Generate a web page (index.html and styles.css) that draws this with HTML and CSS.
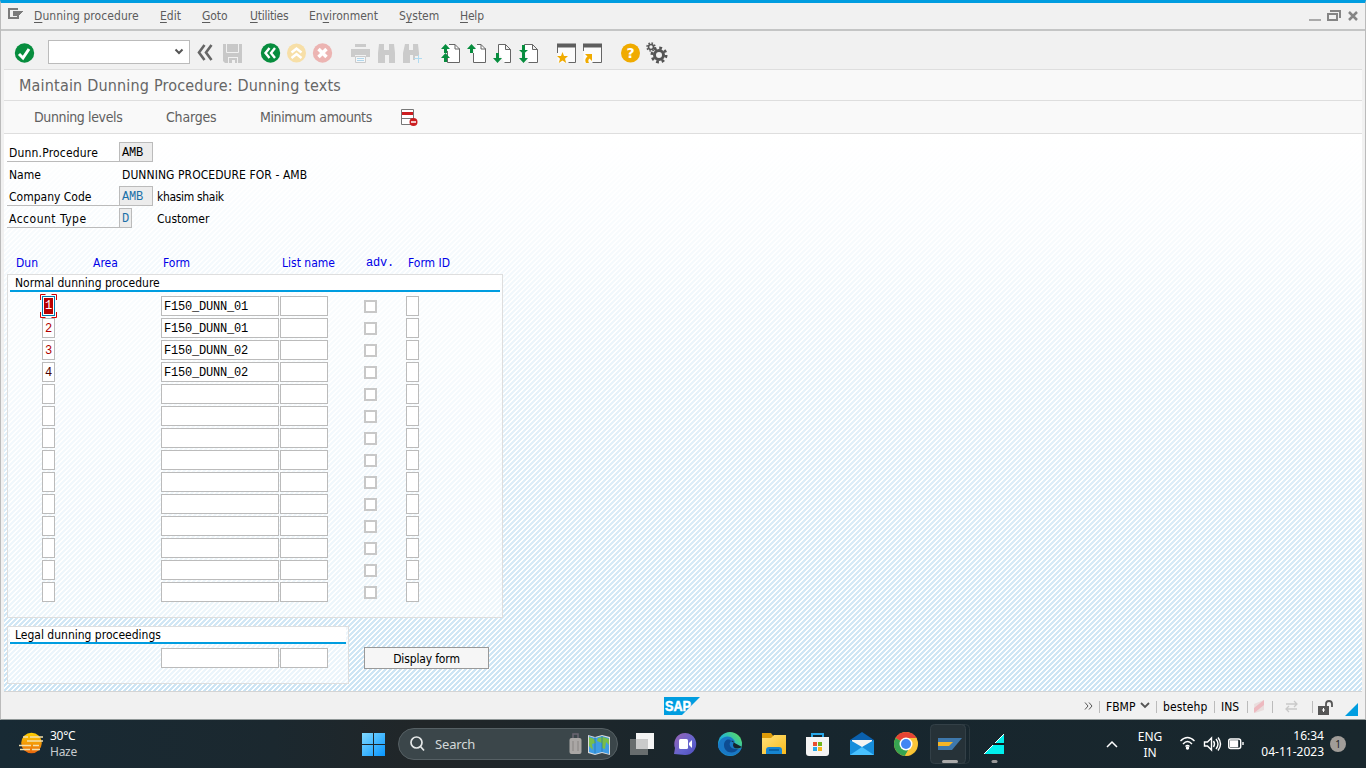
FILE: index.html
```html
<!DOCTYPE html>
<html lang="en">
<head>
<meta charset="utf-8">
<title>Maintain Dunning Procedure: Dunning texts</title>
<link rel="stylesheet" href="styles.css">
</head>
<body>
<div class="window">
  <nav class="menubar">
    <svg class="menu-icon" width="16" height="12" shape-rendering="crispEdges"><path d="M1 1H10M1 0V11M0 10H10M9.500 7V11" stroke="#7b7b7b" stroke-width="2" fill="none"/><path d="M5 3H15L11 8H5Z" fill="#7b7b7b"/></svg>
    <span class="m1"><u>D</u>unning procedure</span><span class="m2"><u>E</u>dit</span><span class="m3"><u>G</u>oto</span><span class="m4"><u>U</u>tilities</span><span class="m5">En<u>v</u>ironment</span><span class="m6">S<u>y</u>stem</span><span class="m7"><u>H</u>elp</span>
    <svg class="controls" width="52" height="14" fill="none" stroke="#858585" stroke-width="2"><path d="M1 11H13" stroke="#aaa"/><path d="M20 5H29V11H20ZM22 2H32V9"/><path d="M41 3L49 11M49 3L41 11" stroke-width="2.500"/></svg>
  </nav>
  <div class="toolbar">
    <svg class="tools" width="680" height="38" viewBox="0 31 680 38">
      <circle cx="24.500" cy="53" r="9.700" fill="#078d3e"/><path d="M19 54l4 4 6-9" fill="none" stroke="#fff" stroke-width="3"/>
      <rect x="48.500" y="40.500" width="141" height="23" fill="#fff" stroke="#bbb"/><path d="M175.500 49.500l3.500 3.500 3.500-3.500" fill="none" stroke="#555" stroke-width="2"/>
      <path d="M204.500 45l-5.500 7.500 5.500 7.500M211.500 45l-5.500 7.500 5.500 7.500" fill="none" stroke="#666" stroke-width="2.600"/>
      <path d="M223 44h19v19h-17l-2-2z" fill="#c8c8c8"/><path d="M226.500 44v8.500h12V44" fill="none" stroke="#f1f1f1"/><path d="M228 63v-6h10v6z" fill="#f1f1f1"/><path d="M229 63v-5h8v5h-2v-3h-3v3z" fill="#c8c8c8"/>
      <circle cx="270.500" cy="53" r="9.700" fill="#078d3e"/><path d="M269.500 48l-4 5 4 5M275 48l-4 5 4 5" fill="none" stroke="#fff" stroke-width="2.400"/>
      <circle cx="296.500" cy="53" r="9.500" fill="#f7dfa7"/><path d="M291.500 52.500l5-4 5 4M291.500 58l5-4 5 4" fill="none" stroke="#fff" stroke-width="2.500"/>
      <circle cx="322.500" cy="53" r="9.700" fill="#ecb4b2"/><path d="M318.500 49l8 8M326.500 49l-8 8" stroke="#fff" stroke-width="3.500"/>
      <g fill="#cbcbcb"><path d="M355 44h11v3h-11zM351 49h19v8h-4v-2h-11v2h-4z"/><path d="M355.500 56.500h10v6h-10z" fill="#f4f7f9" stroke="#cbcbcb"/><path d="M357 58.500h7M357 60.500h7" stroke="#b0d5ea"/>
      <path d="M379 44h5v6h5v-6h5l1 9v10h-6v-8h-4v8h-7v-10z"/><path d="M405 44h4v6h4v-6h5l1 9v3h-4v4h-2v-5h-3v8h-7v-10z"/><path d="M414 58.500h8M418.500 55v8" stroke="#b0dbf1"/></g>
      <g fill="#fff" stroke="#666"><path d="M447.500 51v11.500h12V49L455 44.500h-6M455 44.500v4.500h5"/><path d="M473.500 53v9.500h12V49L481 44.500h-4M481 44.500v4.500h5"/><path d="M498.500 53v-8.500h7l5 5v13h-6M505.500 44.500v5h5"/><path d="M524.500 52v-7.500h8l5 5v13h-9M532.500 44.500v5h5"/></g>
      <g fill="#078d3e"><path d="M445.500 44l4.500 5h-3v4h-3v-4h-3zM445.500 53l4.500 5h-3v4h-3v-4h-3zM471.500 44l4.500 5h-3v4h-3v-4h-3zM497.500 63l-4.500-5h3v-5h3v5h3zM523.500 54l-4.500-4h3v-5h3v5h3zM523.500 63l-4.500-5h3v-5h3v5h3z"/></g>
      <path d="M557.500 47v15.500h18V47M583.500 47v15.500h18V47" fill="#fbfbfb"/><path d="M557 43.500h19v4h-19zM583 43.500h19v4h-19z" fill="#5e5e5e"/><path d="M557.500 47v6M575.500 47v15.500h-7M583.500 47v4M601.500 47v15.500h-9" stroke="#666" fill="none"/><path d="M562.500 52l1.500 4h4l-3 2.700 1.200 4.300-3.700-2.500-3.700 2.500 1.200-4.300-3-2.700h4z" fill="#f0ab00"/><path d="M585 54h7v7l-2.500-2.500c-1.500 1-1.500 3-.5 4.500h-3c-1.500-3-.5-5 1.500-6.500z" fill="#f0ab00"/>
      <circle cx="630.500" cy="53" r="9.500" fill="#f0ab00"/><text x="630.500" y="58" class="question">?</text>
      <g fill="none" stroke="#555"><circle cx="659" cy="55" r="4.500" stroke-width="3"/><circle cx="659" cy="55" r="7" stroke-width="3" stroke-dasharray="2.750 2.750"/><circle cx="651" cy="47" r="2.500" stroke-width="1.600"/><circle cx="651" cy="47" r="4" stroke-width="1.500" stroke-dasharray="1.570 1.570"/></g>
    </svg>
  </div>
  <header class="title"><h1>Maintain Dunning Procedure: Dunning texts</h1></header>
  <div class="actions"><span class="a1">Dunning levels</span><span class="a2">Charges</span><span class="a3">Minimum amounts</span>
    <svg class="delete-row" width="18" height="18"><path d="M.500.500h12v15H.500zM0 9.500h12" fill="#fff" stroke="#777"/><path d="M1 3h11v3H1z" fill="#cc1d20"/><circle cx="12.500" cy="13" r="4" fill="#cc1d20"/><path d="M10 13h5" stroke="#fff" stroke-width="1.500"/></svg>
  </div>
  <main class="content">
    <section class="keys">
      <div class="key"><label class="lined k1">Dunn.Procedure</label><b class="code">AMB</b></div>
      <div class="key"><label class="k2">Name</label><span class="name">DUNNING PROCEDURE FOR - AMB</span></div>
      <div class="key"><label class="lined k3">Company Code</label><b class="code blue">AMB</b><span class="desc d1">khasim shaik</span></div>
      <div class="key"><label class="lined k4">Account Type</label><b class="code blue short">D</b><span class="desc d2">Customer</span></div>
    </section>
    <div class="heads"><span>Dun</span><span>Area</span><span>Form</span><span>List name</span><span class="mono">adv.</span><span>Form ID</span></div>
    <section class="group normal">
      <h2>Normal dunning procedure</h2>
      <div class="rows">
        <div class="row"><i class="active"><em>1</em><svg width="17" height="24" fill="none" stroke="#d00000"><path d="M5.500.500H.500V6M11.500.500h5V6M.500 18v5.500h5M16.500 18v5.500h-5"/></svg></i><i>F150_DUNN_01</i><i></i><i></i><i></i></div>
        <div class="row"><i class="red">2</i><i>F150_DUNN_01</i><i></i><i></i><i></i></div>
        <div class="row"><i class="red">3</i><i>F150_DUNN_02</i><i></i><i></i><i></i></div>
        <div class="row"><i class="dark">4</i><i>F150_DUNN_02</i><i></i><i></i><i></i></div>
        <div class="row"><i></i><i></i><i></i><i></i><i></i></div>
        <div class="row"><i></i><i></i><i></i><i></i><i></i></div>
        <div class="row"><i></i><i></i><i></i><i></i><i></i></div>
        <div class="row"><i></i><i></i><i></i><i></i><i></i></div>
        <div class="row"><i></i><i></i><i></i><i></i><i></i></div>
        <div class="row"><i></i><i></i><i></i><i></i><i></i></div>
        <div class="row"><i></i><i></i><i></i><i></i><i></i></div>
        <div class="row"><i></i><i></i><i></i><i></i><i></i></div>
        <div class="row"><i></i><i></i><i></i><i></i><i></i></div>
        <div class="row"><i></i><i></i><i></i><i></i><i></i></div>
      </div>
    </section>
    <div class="bottom">
      <section class="group legal"><h2>Legal dunning proceedings</h2><div class="legal-fields"><i></i><i></i></div></section>
      <button>Display form</button>
    </div>
  </main>
  <footer class="status">
    <svg class="sap" width="36" height="18"><path d="M0 0h36L18 18H0z" fill="#009de0"/><text x="1" y="13.500" textLength="26" lengthAdjust="spacingAndGlyphs">SAP</text></svg>
    <svg class="more" width="9" height="8" fill="none" stroke="#555"><path d="M1 .500l3 3.500-3 3.500M5 .500l3 3.500-3 3.500"/></svg>
    <span class="s1">FBMP</span><svg class="drop" width="10" height="7"><path d="M1 1l4 4 4-4" fill="none" stroke="#555" stroke-width="1.800"/></svg>
    <span class="s2">bestehp</span><span class="s3">INS</span>
    <svg class="state" width="112" height="22" viewBox="1247 696 112 22"><path d="M1247.500 700v12M1272.500 700v12M1312.500 700v12" stroke="#bbb"/><path d="M1254 703l10-4v10l-9 3z" fill="#e9dddd"/><path d="M1254 707l10-8v5l-10 8z" fill="#edb9bf"/><path d="M1286 703h11m-3-3l3 3-3 3M1297 708h-11m3-3l-3 3 3 3" fill="none" stroke="#c9c9c9" stroke-width="1.300"/><path d="M1318 705h11v9h-11z" fill="#555"/><path d="M1326 705v-2c0-4 6-4 6 0v3" fill="none" stroke="#555" stroke-width="1.800"/><path d="M1323.500 707v4m-1.500-2h3" stroke="#fff"/><path d="M1345 715h13v-13z" fill="#009de0"/></svg>
  </footer>
</div>
<div class="taskbar">
  <svg class="weather" width="26" height="24"><defs><linearGradient id="sun" x2="0" y2="1"><stop stop-color="#ffd000"/><stop offset="1" stop-color="#e9670d"/></linearGradient></defs><circle cx="12.500" cy="11" r="10.300" fill="url(#sun)"/><path d="M4 5h5M11 5h13M8 9h16M0 13.500h12M14 13.500h6M1 17.500h10M13 17.500h8" stroke="#f3dfac" stroke-width="1.700"/></svg>
  <div class="forecast"><span>30°C</span><span>Haze</span></div>
  <svg class="start" width="24" height="24"><defs><linearGradient id="win" x2="1" y2="1"><stop stop-color="#80d9ff"/><stop offset="1" stop-color="#0796ff"/></linearGradient></defs><path d="M0 0h11v11H0zM12 0h11v11H12zM0 12h11v11H0zM12 12h11v11H12z" fill="url(#win)"/></svg>
  <div class="search">
    <svg width="16" height="16" fill="none" stroke="#e5e8e8" stroke-width="1.700"><circle cx="6.500" cy="6.500" r="5.500"/><path d="M10.500 10.500L14 14.500"/></svg><span>Search</span>
    <svg class="travel" width="42" height="24"><path d="M4 8V2h5v6" fill="none" stroke="#6b6572" stroke-width="1.500"/><rect x=".500" y="6" width="12" height="16" rx="2" fill="#aaa7a5"/><path d="M4 9v10M9 9v10" stroke="#878482"/><path d="M19 3l7 2 7-2 8 2v18l-8-2-7 2-7-2z" fill="#ddd"/><path d="M20 4l6 2 7-2 7 2v16l-7-2-7 2-6-2z" fill="#3f9ce4"/><path d="M20 5l5 2 2 4-4 1 1 6-4-4zM29 6l5-1 6 2v6l-3-3-1 7-3-1v-5l-5-2z" fill="#79bd4a"/><path d="M26 5v16M33 4v16" stroke="#2475a6" opacity=".7"/></svg>
  </div>
  <svg class="apps" width="380" height="48" viewBox="628 720 380 48">
    <defs><linearGradient id="edge" x1="0" y1="1" x2="1" y2="0"><stop stop-color="#1377c9"/><stop offset=".5" stop-color="#24b6cf"/><stop offset="1" stop-color="#65e34c"/></linearGradient><linearGradient id="chat" x2="1" y2="1"><stop stop-color="#9a62b2"/><stop offset=".6" stop-color="#6264cf"/><stop offset="1" stop-color="#504bb8"/></linearGradient><linearGradient id="folder" x2="1" y2="1"><stop stop-color="#ffe17b"/><stop offset="1" stop-color="#f9ba1b"/></linearGradient></defs>
    <path d="M636 733h18v16h-18z" fill="#f4f4f4"/><path d="M630 739h18v16h-18z" fill="#686d6e"/><path d="M636 739h12v10h-12z" fill="#c9caca"/>
    <path d="M674 754l1-6a11 11 0 1 1 10 7z" fill="url(#chat)"/><rect x="679" y="739" width="9" height="10" rx="1.500" fill="#fff"/><path d="M689 743l3-3v8l-3-3z" fill="#fff"/>
    <circle cx="730" cy="744" r="12" fill="url(#edge)"/><path d="M718 746c1-9 11-13 16-6 2 3-1 4 0 7 2 3 6 2 8 0-2 7-10 11-17 7-5-3-7-6-7-8" fill="#1978c5"/><path d="M724 745c0-5 5-7 7-4-3 3-1 9 7 8-4 6-14 4-14-4" fill="#0d4c92"/><path d="M731 741c3-1 3 1 2 4 0 3 3 5 9 2" fill="#17252d"/>
    <path d="M762 733h9l3 4-3 3h-9z" fill="#dd9b08"/><path d="M762 738h9l3-3h12v19h-24z" fill="url(#folder)"/><path d="M766 754v-4q0-3 3-3h10q3 0 3 3v4z" fill="#1685d1"/><path d="M769 750h10" stroke="#075a9a" stroke-width="1.500"/>
    <path d="M812 738v-4h11v4" fill="none" stroke="#28a7e8" stroke-width="2"/><path d="M806 737h23v16q0 3-3 3h-17q-3 0-3-3z" fill="#f4f4f4"/><path d="M813 742h4v4h-4z" fill="#e84f32"/><path d="M818 742h4v4h-4z" fill="#70b51b"/><path d="M813 747h4v4h-4z" fill="#28a7e8"/><path d="M818 747h4v4h-4z" fill="#f7b51a"/>
    <path d="M850 740l12-8 12 8v5h-24z" fill="#0a60ad"/><path d="M852 740h20v8h-20z" fill="#f3f3f3"/><path d="M850 740l12 7 12-7v15h-24z" fill="#168ddb"/><path d="M850 755l12-8 12 8z" fill="#48c1ff"/>
    <circle cx="906" cy="744" r="12" fill="#f5c02f"/><path d="M906 744L895.600 738A12 12 0 0 1 916.400 738z" fill="#e74335"/><path d="M906 744L895.600 738A12 12 0 0 0 905 756l5-9z" fill="#36a451"/><path d="M906 738h10.500q2 6-.5 11.500l-7 6-4 0 6-10z" fill="#fbc538"/><circle cx="906" cy="744" r="6.500" fill="#fff"/><circle cx="906" cy="744" r="5" fill="#4285f4"/>
    <rect x="933.500" y="724.500" width="36" height="39" rx="4" fill="none" stroke="#2b383e"/><rect x="930.500" y="724.500" width="35" height="39" rx="4" fill="#263238" stroke="#334047"/><path d="M938 738h24l-10 12h-14z" fill="#3e78ac"/><path d="M938 742h15l-4 4h-11z" fill="#f5b526"/><path d="M943.500 761.500h13" stroke="#aaa" stroke-width="3" stroke-linecap="round"/>
    <path d="M984 754l20-20v20z" fill="#00efed"/><path d="M984 754l20-20" stroke="#fff"/><path d="M993 744h12" stroke="#101a20" stroke-width="2"/><path d="M993 761.500h3" stroke="#999" stroke-width="3" stroke-linecap="round"/>
  </svg>
  <svg class="up" width="12" height="8"><path d="M1 7l5-5 5 5" fill="none" stroke="#fff" stroke-width="1.500"/></svg>
  <div class="language"><span>ENG</span><span>IN</span></div>
  <svg class="network" width="64" height="18" fill="none" stroke="#fff" stroke-width="1.400"><path d="M.500 6q7-7 14 0M3 9q4.500-5 9 0M5.500 11.500q2-2 4 0"/><circle cx="7.500" cy="13" r="1" fill="#fff"/><path d="M24.500 7h3l4-4v12l-4-4h-3zM33.500 6q2 3 0 6M36 4q4 5 0 10M38 2.500q5 6.500 0 13"/><rect x="48.700" y="4" width="12" height="9.500" rx="2"/><path d="M50.500 6h7v5.500h-7z" fill="#fff"/><path d="M63 7v3"/></svg>
  <div class="clock"><span>16:34</span><span>04-11-2023</span></div><span class="badge">1</span>
</div>
</body>
</html>
```

FILE: styles.css
```css
* { box-sizing: border-box; }
body { margin: 0; width: 1366px; height: 768px; overflow: hidden; font: 12px/16px "DejaVu Sans Condensed", "DejaVu Sans", sans-serif; font-stretch: condensed; color: #000; }
svg { display: block; flex: none; }
span, label, h1, h2 { white-space: nowrap; }
.window { display: flex; flex-direction: column; height: 720px; border: 1px solid #bbb; border-top: 3px solid #009de0; background: #f1f1f1; border-bottom-color: #909898; }
.menubar { display: flex; height: 28px; padding: 5px 5px 0 7px; border-bottom: 2px solid #c4c5c5; color: #5c5c5c; flex: none; }
.menubar span { flex: none; }
.menubar u { text-underline-offset: 2px; }
.menu-icon { margin-right: 10px; }
.m1 { width: 126px; letter-spacing: .06px; } .m2 { width: 42px; } .m3 { width: 48px; letter-spacing: -.1px; } .m4 { width: 59px; letter-spacing: -.25px; } .m5 { width: 90px; } .m6 { width: 61px; } .m7 { letter-spacing: -.2px; }
.controls { margin: 1px 0 0 auto; }
.toolbar { height: 39px; flex: none; margin: 0 3px; border-bottom: 1px solid #dedede; }
.tools { margin-left: -4px; }
.question { fill: #fff; font: bold 14px "DejaVu Sans", sans-serif; text-anchor: middle; }
.title { height: 31px; flex: none; margin: 0 3px; padding: 6px 15px; background: #f9f9f9; border-bottom: 1px solid #dedede; }
h1 { margin: 0; font: 16px/19px "DejaVu Sans Condensed", sans-serif; letter-spacing: .18px; color: #666; }
.actions { display: flex; height: 33px; flex: none; margin: 0 3px; padding: 8px 30px; background: #f9f9f9; border-bottom: 1px solid #dedede; color: #606060; font-size: 14px; line-height: 17px; letter-spacing: -.38px; }
.a1 { width: 132px; } .a2 { width: 94px; letter-spacing: -.2px; } .a3 { width: 141px; }
.content { height: 558px; flex: none; margin: 0 3px; border-bottom: 1px solid #d4d4d4; padding: 8px 3px 0; background: linear-gradient(#fff 0%, rgba(255,255,255,.85) 20%, rgba(255,255,255,.4) 62%, rgba(255,255,255,.08) 100%), url("data:image/svg+xml,%3Csvg xmlns='http://www.w3.org/2000/svg' width='5' height='5' shape-rendering='crispEdges'%3E%3Cpath fill='%23fff' d='M0 0h5v5H0z'/%3E%3Cpath fill='%23c7e2f3' d='M0 0h3v1H0zM4 1h1v1H4zM0 1h2v1H0zM3 2h2v1H3zM0 2h1v1H0zM2 3h3v1H2zM1 4h3v1H1z'/%3E%3C/svg%3E"); }
.keys { height: 112px; }
.key { display: flex; height: 22px; }
.key label { width: 112px; height: 20px; padding: 3px 2px; }
.lined { border-bottom: 1px solid #bbb; }
.k1 { letter-spacing: .18px; } .k4 { letter-spacing: .5px; }
.code { width: 34px; height: 20px; padding: 2px 2px; border: 1px solid #bbb; background: #ececec; font: 12px/17px "Liberation Mono", monospace; letter-spacing: -.2px; }
.blue { color: #1b70a8; }
.short { width: 13px; }
.name { padding: 3px; letter-spacing: .07px; }
.desc { padding: 3px 4px; }
.d1 { letter-spacing: -.32px; }
.d2 { margin-left: 21px; }
.heads { display: grid; grid-template-columns: 77px 70px 119px 84px 42px 1fr; padding: 1px 0 0 9px; height: 20px; color: #0000e8; }
.mono, i { font: 12px/16px "Liberation Mono", monospace; letter-spacing: -.2px; }
.group { border: 1px solid #dedede; background: rgba(255,255,255,.6); }
h2 { margin: 0 2px; height: 17px; padding-left: 5px; border-bottom: 2px solid #009de0; background: #fff; font: inherit; line-height: 17px; }
.normal { width: 496px; height: 344px; }
.rows { padding: 4px 0 0 34px; }
.row { display: grid; grid-template-columns: 13px 106px 118px 1px 48px 36px 13px 29px 13px; height: 22px; }
.row i, .legal-fields i { height: 20px; border: 1px solid #bbb; background: #fff; padding: 2px; }
.row i:nth-child(2) { grid-column: 3; }
.row i:nth-child(3) { grid-column: 5; }
.row i:nth-child(4) { grid-column: 7; width: 13px; height: 13px; margin-top: 4px; border: 2px solid #c8c8c8; }
.row i:nth-child(5) { grid-column: 9; }
.row .red { color: #b00000; }
.row .dark { color: #4a0000; }
.row .active { position: relative; border-color: #007cb0; padding: 1px; }
.active em { display: block; height: 16px; background: #b80000; color: #fff; font-style: normal; padding-left: 1px; }
.active svg { position: absolute; left: -3px; top: -3px; }
.bottom { display: flex; gap: 15px; margin-top: 8px; }
.legal { width: 342px; height: 58px; }
.legal-fields { display: flex; gap: 1px; padding: 4px 0 0 153px; }
.legal-fields i:first-child { width: 118px; }
.legal-fields i:last-child { width: 48px; }
button { width: 125px; height: 22px; margin-top: 21px; padding: 1px 0 0; border: 1px solid #999; background: #f6f6f6; font: inherit; letter-spacing: -.15px; color: #000; }
.status { display: flex; height: 27px; flex: none; padding-top: 5px; }
.sap { margin-left: 663px; }
.sap text { fill: #fff; stroke: #fff; stroke-width: .5px; font: bold 14px "Liberation Sans", sans-serif; }
.more { margin: 5px 6px 0 384px; }
.status span { flex: none; height: 12px; padding-left: 6px; border-left: 1px solid #bbb; line-height: 12px; margin-top: 4px; }
.s1 { width: 41px; } .s2 { width: 58px; margin-left: 6px; letter-spacing: .1px; } .s3 { width: 32px; }
.drop { margin-top: 5px; }
.state { margin-left: auto; margin-right: 6px; }
.taskbar { display: flex; height: 48px; background: linear-gradient(90deg, #182a34, #1b282f 20%, #212628 31%, #17262e 58%, #19272d); color: #fff; font: 12px/16px "Noto Sans", sans-serif; }
.weather { margin: 12px 5px 0 19px; }
.forecast, .language, .clock { display: flex; flex-direction: column; padding-top: 8px; }
.forecast { width: 311px; }
.forecast span:first-child { letter-spacing: -.3px; }
.forecast span:last-child { color: #c7cccf; letter-spacing: -.25px; }
.start { margin: 13px 12px 0 1px; }
.search { display: flex; flex: none; width: 220px; height: 32px; margin-top: 8px; padding: 7px 0 0 11px; border-radius: 16px; border: 1px solid #566064; background: #3b464a; font-size: 13px; letter-spacing: -.15px; color: #d4d8d9; }
.search span { width: 143px; padding-left: 9px; }
.travel { margin-top: -4px; }
.apps { margin-left: 10px; }
.up { margin: 20px 0 0 98px; }
.language { width: 40px; margin-left: 12px; text-align: center; padding-top: 9px; }
.network { margin: 15px 0 0 10px; }
.clock { width: 77px; text-align: right; margin-left: 3px; }
.badge { width: 16px; height: 16px; border-radius: 50%; margin: 16px 0 0 6px; background: #a19d99; color: #222; font-size: 10px; text-align: center; }
```
